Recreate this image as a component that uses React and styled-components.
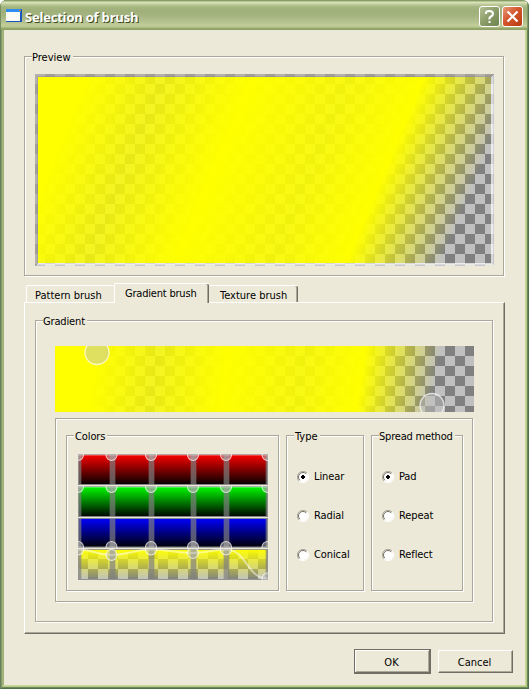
import React from "react";
import styled, { createGlobalStyle, css } from "styled-components";

const face = "#ece9d8";
const shadow = "#aca899";
const dark = "#716f64";

const Global = createGlobalStyle`
  *, *::before, *::after { box-sizing: border-box; }
  body { margin: 0; background: #fff; overflow: hidden; }
`;

const Window = styled.div`
  width: 529px;
  height: 689px;
  padding: 0 4px 4px;
  display: flex;
  flex-direction: column;
  border-radius: 7px 7px 0 0;
  overflow: hidden;
  color: #000;
  font: 11px/13px "DejaVu Sans Condensed", "DejaVu Sans", sans-serif;
  font-stretch: condensed;
  background: #9db078;
  box-shadow: inset 1px 0 #65805a, inset -1px -1px #4f6f4b, inset 2px 0 #849a66,
    inset -2px -2px #6b8a59, inset 3px 0 #a3b880, inset -3px -3px #b7c886,
    inset -4px -4px #c9d79b;
`;

const TitleBar = styled.header`
  flex: none;
  height: 30px;
  margin: 0 -4px;
  padding: 2px 6px 0;
  display: flex;
  align-items: center;
  gap: 2px;
  box-shadow: inset 1px 0 #76905f, inset -1px 0 #5d7a50, inset -2px 0 #829a63;
  background: linear-gradient(#869b62 0, #8da26a 1px, #e0e8c0 2px, #c3cfa0 4px, #a5b57f 7px, #9fb07a 11px, #a5b581 16px, #b4c28f 22px, #c0cd98 25px, #bac892 27px, #9aab70 28px, #8b9f63 30px);
`;

const WindowIcon = styled.svg`
  flex: none;
  margin-top: -1px;
`;

const Title = styled.h1`
  flex: 1;
  margin: 1px 0 0 1px;
  color: #fff;
  font: bold 13px/18px "Open Sans", "Noto Sans", sans-serif;
  letter-spacing: -0.2px;
  text-shadow: 1px 1px #3f4a20;
`;

const CaptionButton = styled.button`
  width: 21px;
  height: 21px;
  padding: 0;
  display: grid;
  place-items: center;
  border: 1px solid #fff;
  border-radius: 3px;
  background: ${(p) =>
    p.$close
      ? "linear-gradient(135deg, #e79a7c, #d4552c 45%, #b83c10)"
      : "linear-gradient(135deg, #b3c094, #8a9c68 50%, #6f8450)"};
`;

const Body = styled.main`
  flex: 1;
  padding: 26px 20px 0;
  background: ${face};
`;

const etched = css`
  border: 1px solid ${shadow};
  box-shadow: 1px 1px #fff, inset 1px 1px #fff;
`;

const Group = styled.section`
  ${etched}
  width: ${(p) => p.$w}px;
  height: ${(p) => p.$h}px;
  display: flex;
  flex-direction: column;
  align-items: flex-start;
`;

const Legend = styled.h2`
  flex: none;
  height: 13px;
  width: ${(p) => p.$w}px;
  margin: -6px 0 0 7px;
  padding-left: ${(p) => (p.$inset ? 1 : 0)}px;
  background: ${face};
  font: inherit;
  white-space: nowrap;
`;

const Label = styled.span`
  letter-spacing: ${(p) => p.$ls || 0}px;
  white-space: nowrap;
`;

const Canvas = styled.svg`
  display: block;
  flex: none;
  margin: ${(p) => p.$m || 0};
`;

const Tabs = styled.nav`
  display: flex;
  align-items: flex-end;
  height: 19px;
  margin: 7px 0 0 2px;
`;

const Tab = styled.button`
  width: ${(p) => p.$w}px;
  height: ${(p) => (p.$on ? 20 : 17)}px;
  margin: ${(p) => (p.$on ? "0 0 -1px" : "0")};
  padding: ${(p) => (p.$on ? "0 0 1px 10px" : p.$flat ? "2px 0 0 11px" : "2px 0 0 8px")};
  z-index: ${(p) => (p.$on ? 1 : 0)};
  text-align: left;
  font: inherit;
  color: inherit;
  background: ${face};
  border: 0 solid #fff;
  border-top-width: 1px;
  border-left-width: ${(p) => (p.$flat ? 0 : 1)}px;
  border-radius: 2px 2px 0 0;
  box-shadow: ${(p) => (p.$edge ? `inset -1px 0 ${dark}, inset -2px 0 ${shadow}` : "none")};
`;

const Pane = styled.section`
  width: 481px;
  height: 332px;
  padding: 17px 0 0 10px;
  border: 1px solid;
  border-color: #fff ${dark} ${dark} #fff;
  box-shadow: inset -1px -1px ${shadow};
`;

const Frame = styled.div`
  ${etched}
  width: 418px;
  height: 184px;
  margin: 6px 0 0 19px;
  padding: 16px 0 0 10px;
  display: flex;
`;

const Groups = styled.div`
  display: flex;
  gap: 7px;
`;

const Radios = styled.div`
  display: flex;
  flex-direction: column;
  gap: 26px;
  margin: 27px 0 0 10px;
`;

const Radio = styled.label`
  height: 13px;
  display: flex;
  align-items: center;
  gap: 5px;
`;

const Actions = styled.footer`
  display: flex;
  align-items: center;
  gap: 7px;
  margin: 15px -10px 0 330px;
`;

const Button = styled.button`
  flex: none;
  width: ${(p) => (p.$default ? 77 : 75)}px;
  height: ${(p) => (p.$default ? 25 : 23)}px;
  padding: 1px 2px 0 0;
  font: inherit;
  color: inherit;
  background: ${face};
  border: 1px solid;
  border-color: ${(p) => (p.$default ? dark : `#fff ${dark} ${dark} #fff`)};
  box-shadow: ${(p) =>
    p.$default
      ? `inset -1px -1px ${dark}, inset 1px 1px #fff, inset -2px -2px ${shadow}`
      : `inset -1px -1px ${shadow}`};
`;

const STOPS = [
  [0, 1],
  [0.177, 0.82],
  [0.384, 1],
  [0.605, 0.89],
  [0.779, 1],
  [1, 0],
];

function Checks({ id }) {
  return (
    <pattern id={id} width="20" height="20" patternUnits="userSpaceOnUse">
      <path fill="#c0c0c0" d="M0 0h20v20H0z" />
      <path fill="#808080" d="M10 0h10v10H10zM0 10h10v10H0z" />
    </pattern>
  );
}

function BrushGradient({ id, w, h }) {
  return (
    <linearGradient id={id} gradientUnits="userSpaceOnUse" x1={w * 0.1} y1={h * 0.1} x2={w * 0.9} y2={h * 0.9}>
      {STOPS.map(([at, alpha]) => (
        <stop key={at} offset={at} stopColor="#ff0" stopOpacity={alpha} />
      ))}
    </linearGradient>
  );
}

function PreviewCanvas() {
  return (
    <Canvas width="459" height="192" $m="10px 0 0 10px" shapeRendering="crispEdges">
      <defs>
        <Checks id="pc" />
        <BrushGradient id="pg" w={459} h={192} />
      </defs>
      <path fill="url(#pc)" d="M0 0h459v192H0z" />
      <path fill="url(#pg)" d="M3 3h453v186H3z" />
      <path fill="#b0ada2" fillOpacity=".7" d="M0 0h459l-3 3H3v186l-3 3z" />
      <path fill="#fff" fillOpacity=".7" d="M459 0v192H0l3-3h453V3z" />
      <path fill="#808090" fillOpacity=".35" d="M2 2h455v1H3v186H2z" />
      <path fill="#9c9cb0" fillOpacity=".3" d="M0 191h459v1H0zM458 0h1v191h-1z" />
      <path d="M10 191.5h449" stroke={face} strokeOpacity=".8" strokeDasharray="10 10" />
    </Canvas>
  );
}

function GradientCanvas() {
  return (
    <Canvas width="419" height="66" $m="18px 0 0 19px">
      <defs>
        <Checks id="gc" />
        <BrushGradient id="gg" w={419} h={66} />
      </defs>
      <path fill="url(#gc)" d="M0 0h419v66H0z" />
      <path fill="url(#gg)" d="M0 0h419v66H0z" />
      <g fill="#bfbfbf" fillOpacity=".5" stroke="#fff" strokeOpacity=".7" strokeWidth="1.3">
        <circle cx="42" cy="6.5" r="12" />
        <circle cx="377" cy="59.5" r="12" />
      </g>
    </Canvas>
  );
}

const POINTS_X = [0, 33.5, 73, 115, 148, 189.5];

function Shade({ id, color, ys, h = 31, m }) {
  const curve = ys
    .map((y, i) => {
      if (!i) return `M${POINTS_X[0]} ${y}`;
      const mid = (POINTS_X[i - 1] + POINTS_X[i]) / 2;
      return `C${mid} ${ys[i - 1]} ${mid} ${y} ${POINTS_X[i]} ${y}`;
    })
    .join("");
  return (
    <Canvas width="190" height={h} $m={m}>
      <defs>
        <Checks id={`${id}c`} />
        <linearGradient id={id} x1="0" y1="0" x2="0" y2="1">
          <stop offset="0" stopColor={color || "#ff0"} />
          <stop offset="1" stopColor={color ? "#000" : "#ff0"} stopOpacity={color ? 1 : 0} />
        </linearGradient>
      </defs>
      {!color && <path fill={`url(#${id}c)`} d={`M0 0h190v${h}H0z`} />}
      <path fill={`url(#${id})`} d={`M0 0h190v${h}H0z`} />
      {POINTS_X.map((x) => (
        <g key={x} fill="#808080" fillOpacity=".6">
          <path d={`M${Math.round(x) - 2} 0h5v${h}h-5z`} />
          <path fillOpacity=".25" d={`M${Math.round(x) - 3} 0h7v${h}h-7z`} />
        </g>
      ))}
      <path d={`M.5 .5h189v${h - 1}H.5z`} fill="none" stroke="#929292" strokeOpacity=".9" />
      <path d={curve} fill="none" stroke="#fff" strokeOpacity=".5" strokeWidth={color ? 1 : 2} />
      {POINTS_X.map((x, i) => (
        <circle key={x} cx={x} cy={ys[i]} r="5.5" fill="#bfbfbf" fillOpacity=".5" stroke="#fff" strokeOpacity=".7" strokeWidth="1.1" />
      ))}
    </Canvas>
  );
}

function RadioMark({ on }) {
  return (
    <svg width="12" height="12" viewBox="0 0 12 12">
      <circle cx="6" cy="6" r="5" fill="#fff" />
      <path d="M2 10A5.5 5.5 0 0 1 10 2" fill="none" stroke={shadow} />
      <path d="M2.8 9.2A4.5 4.5 0 0 1 9.2 2.8" fill="none" stroke={dark} />
      <path d="M10 2A5.5 5.5 0 0 1 2 10" fill="none" stroke="#fff" />
      {on && <path d="M5 4h2v1h1v2H7v1H5V7H4V5h1z" fill="#000" shapeRendering="crispEdges" />}
    </svg>
  );
}

function RadioList({ items }) {
  return (
    <Radios>
      {items.map((t, i) => (
        <Radio key={t}>
          <RadioMark on={i === 0} />
          <Label $ls={-0.1}>{t}</Label>
        </Radio>
      ))}
    </Radios>
  );
}

export default function App() {
  return (
    <>
      <Global />
      <Window>
        <TitleBar>
          <WindowIcon width="16" height="13" shapeRendering="crispEdges">
            <path fill="#1a56b8" d="M0 0h16v13H0z" />
            <path fill="#2f8cf0" d="M0 0h15v3H0z" />
            <path fill="#fbfbf6" d="M0 3h14v9H0z" />
            <path fill="#e0762c" d="M13 1h2v1h-2z" />
          </WindowIcon>
          <Title>Selection of brush</Title>
          <CaptionButton aria-label="Help">
            <svg width="15" height="15" fill="none" stroke="#fff" strokeWidth="2">
              <path d="M4 5V3.5Q4.5 2 7.5 2T11 4.5Q11 6.5 9 7.5T7.5 10.5M7.5 12v2" />
            </svg>
          </CaptionButton>
          <CaptionButton $close aria-label="Close">
            <svg width="15" height="15" stroke="#fff" strokeWidth="2.2">
              <path d="M2.5 2.5l10 10M12.5 2.5l-10 10" />
            </svg>
          </CaptionButton>
        </TitleBar>
        <Body>
          <Group $w={480} $h={220}>
            <Legend $w={41}>
              <Label>Preview</Label>
            </Legend>
            <PreviewCanvas />
          </Group>
          <Tabs>
            <Tab $w={88}>
              <Label>Pattern brush</Label>
            </Tab>
            <Tab $w={95} $on $edge>
              <Label $ls={-0.2}>Gradient brush</Label>
            </Tab>
            <Tab $w={89} $edge $flat>
              <Label>Texture brush</Label>
            </Tab>
          </Tabs>
          <Pane>
            <Group $w={458} $h={302}>
              <Legend $w={44}>
                <Label $ls={-0.15}>Gradient</Label>
              </Legend>
              <GradientCanvas />
              <Frame>
                <Groups>
                  <Group $w={213} $h={156}>
                    <Legend $w={33} $inset>
                      <Label $ls={-0.1}>Colors</Label>
                    </Legend>
                    <Shade id="red" color="#f00" ys={[1, 1, 1, 1, 1, 1]} m="11px 0 1px 11px" />
                    <Shade id="green" color="#0f0" ys={[1, 1, 1, 1, 1, 1]} m="0 0 1px 11px" />
                    <Shade id="blue" color="#00f" h={30} ys={[29, 29, 29, 29, 29, 29]} m="0 0 1px 11px" />
                    <Shade id="alpha" ys={[0.5, 6, 0.5, 4, 0.5, 29.5]} m="0 0 0 11px" />
                  </Group>
                  <Group $w={78} $h={156}>
                    <Legend $w={26} $inset>
                      <Label>Type</Label>
                    </Legend>
                    <RadioList items={["Linear", "Radial", "Conical"]} />
                  </Group>
                  <Group $w={92} $h={156}>
                    <Legend $w={76}>
                      <Label $ls={-0.2}>Spread method</Label>
                    </Legend>
                    <RadioList items={["Pad", "Repeat", "Reflect"]} />
                  </Group>
                </Groups>
              </Frame>
            </Group>
          </Pane>
          <Actions>
            <Button $default>OK</Button>
            <Button>Cancel</Button>
          </Actions>
        </Body>
      </Window>
    </>
  );
}
